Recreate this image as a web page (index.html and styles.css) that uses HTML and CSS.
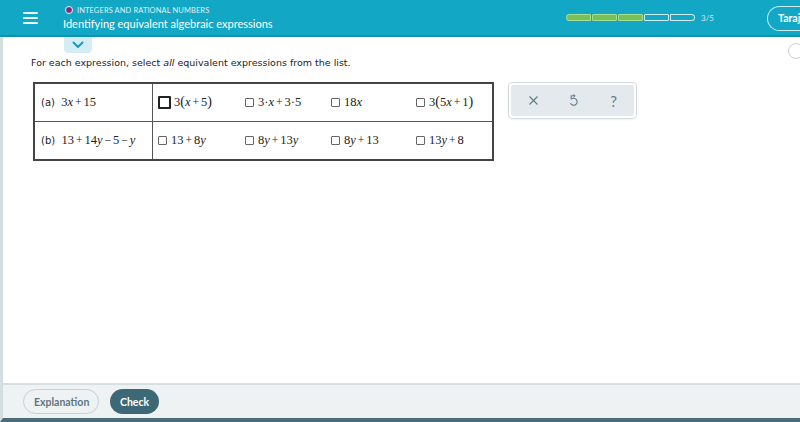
FILE: index.html
```html
<!DOCTYPE html>
<html>
<head>
<meta charset="utf-8">
<link rel="stylesheet" href="styles.css">
</head>
<body>
<div class="app">
  <header class="topbar">
    <div class="menu"><span></span><span></span><span></span></div>
    <div class="titles">
      <div class="topic"><span class="dot"></span>INTEGERS AND RATIONAL NUMBERS</div>
      <div class="title">Identifying equivalent algebraic expressions</div>
    </div>
    <div class="progress">
      <span class="seg done first"></span><span class="seg done"></span><span class="seg done"></span><span class="seg"></span><span class="seg last"></span>
      <span class="count">3/5</span>
    </div>
    <div class="user">Taraj</div>
  </header>
  <main class="main">
    <div class="tab"><svg width="12" height="8" viewBox="0 0 12 8"><path d="M1.5 1.5 L6 6 L10.5 1.5" fill="none" stroke="#1a9cba" stroke-width="2" stroke-linecap="round" stroke-linejoin="round"/></svg></div>
    <div class="side-circle"></div>
    <p class="prompt">For each expression, select <i>all</i> equivalent expressions from the list.</p>
    <div class="work">
      <table class="q">
        <tr>
          <td class="lbl">(a)&nbsp; <span class="m">3<i>x</i><span class="op">+</span>15</span></td>
          <td class="opts">
            <div class="row">
              <label class="opt o1"><span class="cb big"></span><span class="m">3<span class="p">(</span><i>x</i><span class="op">+</span>5<span class="p">)</span></span></label>
              <label class="opt o2"><span class="cb"></span><span class="m">3·<i>x</i><span class="op">+</span>3·5</span></label>
              <label class="opt o3"><span class="cb"></span><span class="m">18<i>x</i></span></label>
              <label class="opt o4"><span class="cb"></span><span class="m">3<span class="p">(</span>5<i>x</i><span class="op">+</span>1<span class="p">)</span></span></label>
            </div>
          </td>
        </tr>
        <tr>
          <td class="lbl">(b)&nbsp; <span class="m">13<span class="op">+</span>14<i>y</i><span class="op">−</span>5<span class="op">−</span><i>y</i></span></td>
          <td class="opts">
            <div class="row">
              <label class="opt o1"><span class="cb"></span><span class="m">13<span class="op">+</span>8<i>y</i></span></label>
              <label class="opt o2"><span class="cb"></span><span class="m">8<i>y</i><span class="op">+</span>13<i>y</i></span></label>
              <label class="opt o3"><span class="cb"></span><span class="m">8<i>y</i><span class="op">+</span>13</span></label>
              <label class="opt o4"><span class="cb"></span><span class="m">13<i>y</i><span class="op">+</span>8</span></label>
            </div>
          </td>
        </tr>
      </table>
      <div class="tools">
        <div class="tools-in">
          <svg width="11" height="11" viewBox="0 0 11 11"><path d="M1.5 1.5 L9.5 9.5 M9.5 1.5 L1.5 9.5" stroke="#5f7d89" stroke-width="1.1" fill="none"/></svg>
          <svg width="11" height="13" viewBox="0 0 11 13"><path d="M7 1.8 H3.2 V5.2 M3.2 5.2 A3.5 3.5 0 1 1 2.5 9.3" stroke="#5f7d89" stroke-width="1.1" fill="none" stroke-linejoin="round"/><path d="M5.4 0.4 L7.2 1.8 L5.4 3.2" stroke="#5f7d89" stroke-width="1" fill="none"/></svg>
          <span class="help">?</span>
        </div>
      </div>
    </div>
  </main>
  <footer class="footer">
    <button class="btn expl">Explanation</button>
    <button class="btn check">Check</button>
  </footer>
</div>
</body>
</html>
```

FILE: styles.css
```css
html, body { margin: 0; padding: 0; }
body { width: 800px; height: 422px; overflow: hidden; background: #fff; font-family: "Open Sans", "DejaVu Sans", sans-serif; }
.app { display: flex; flex-direction: column; height: 422px; }

.topbar { height: 35px; flex: none; background: #12a7c4; border-bottom: 2px solid #0f94ae; display: flex; align-items: center; position: relative; }
.menu { width: 15px; margin-left: 23px; display: flex; flex-direction: column; gap: 3px; }
.menu span { display: block; height: 2px; background: #e6f6fa; border-radius: 1px; }
.titles { margin-left: 25px; display: flex; flex-direction: column; gap: 2px; }
.topic { font-family: "Lato", sans-serif; font-size: 7.5px; color: #dff3f8; letter-spacing: 0.1px; display: flex; align-items: center; margin-left: 2px; }
.dot { width: 6px; height: 6px; border-radius: 50%; background: #7b2a7e; border: 1px solid #e5f5f9; margin-right: 4px; }
.title { font-family: "Lato", sans-serif; font-size: 11px; color: #fff; }
.progress { margin-left: auto; display: flex; align-items: center; gap: 1px; margin-right: 53px; }
.seg { width: 23px; height: 5px; border: 1px solid #cdeef5; border-radius: 1px; }
.seg.done { background: #78c05a; border-color: #a6dd8e; }
.seg.first { border-radius: 4px 1px 1px 4px; }
.seg.last { border-radius: 1px 4px 4px 1px; }
.count { font-family: "Lato", sans-serif; font-size: 8px; color: #cdeef5; margin-left: 5px; }
.user { width: 33px; height: 25px; box-sizing: border-box; border: 1px solid #cdeef5; border-right: none; border-radius: 13px 0 0 13px; color: #fff; font-family: "Lato", sans-serif; font-weight: bold; font-size: 10.5px; padding-left: 10px; line-height: 23px; margin-top: 1px; overflow: hidden; white-space: nowrap; }

.main { flex: 1; border-left: 3px solid #d4dde0; position: relative; }
.tab { position: absolute; left: 61px; top: 0; width: 28px; height: 16px; background: #d3edf4; border-radius: 0 0 4px 4px; display: flex; align-items: center; justify-content: center; }
.side-circle { position: absolute; right: -4px; top: 6px; width: 14px; height: 14px; border: 1px solid #c9cfd2; border-radius: 50%; background: #fff; }
.prompt { margin: 20px 0 0 28px; font-family: "DejaVu Sans", Verdana, sans-serif; font-size: 9.5px; color: #222; }
.work { display: flex; align-items: flex-start; margin: 14px 0 0 30px; }
.q { border-collapse: collapse; border: 2px solid #444; width: 461px; font-family: "DejaVu Sans", Verdana, sans-serif; font-size: 10px; color: #222; }
.q td { border: 1.5px solid #555; height: 37px; padding: 0; }
.lbl { width: 111px; padding-left: 6px !important; }
.m { font-family: "Liberation Serif", "DejaVu Serif", serif; font-size: 12.5px; white-space: nowrap; }
.op { margin: 0 2px; font-size: 11.5px; }
.p { font-size: 14px; line-height: 1; }
.row { display: flex; align-items: center; }
.opt { display: flex; align-items: center; gap: 3px; }
.o1 { width: 87px; padding-left: 5px; }
.o2 { width: 86px; }
.o3 { width: 85px; }
.cb { width: 7px; height: 7px; border: 1px solid #666; border-radius: 1px; margin-right: 1px; }
.cb.big { width: 9px; height: 9px; border: 2px solid #222; margin-right: 0; }
.tools { margin-left: 15px; margin-top: 1px; border: 2px solid #fff; border-radius: 4px; box-shadow: 0 0 0 1px #d2d9dc, 0 1px 3px rgba(0,0,0,0.12); }
.tools-in { width: 123px; height: 31px; background: #e3e9ec; border-radius: 3px; display: flex; align-items: center; justify-content: center; gap: 29px; box-sizing: border-box; padding-left: 2px; }
.help { font-family: "Lato", sans-serif; font-size: 15px; color: #5f7d89; width: 11px; text-align: center; }

.footer { height: 33px; flex: none; background: #eef2f3; border-top: 2px solid #d7dfe2; border-bottom: 4px solid #4a6e79; border-left: 3px solid #d4dde0; display: flex; align-items: center; padding-left: 20px; gap: 11px; }
.btn { height: 25px; border-radius: 13px; font-family: "Lato", sans-serif; font-weight: bold; font-size: 10.5px; padding: 0 10px; }
.expl { width: 76px; background: #eef2f3; border: 1px solid #c5d1d5; color: #5e7682; }
.check { width: 49px; background: #3d6977; border: none; color: #fff; }
```
